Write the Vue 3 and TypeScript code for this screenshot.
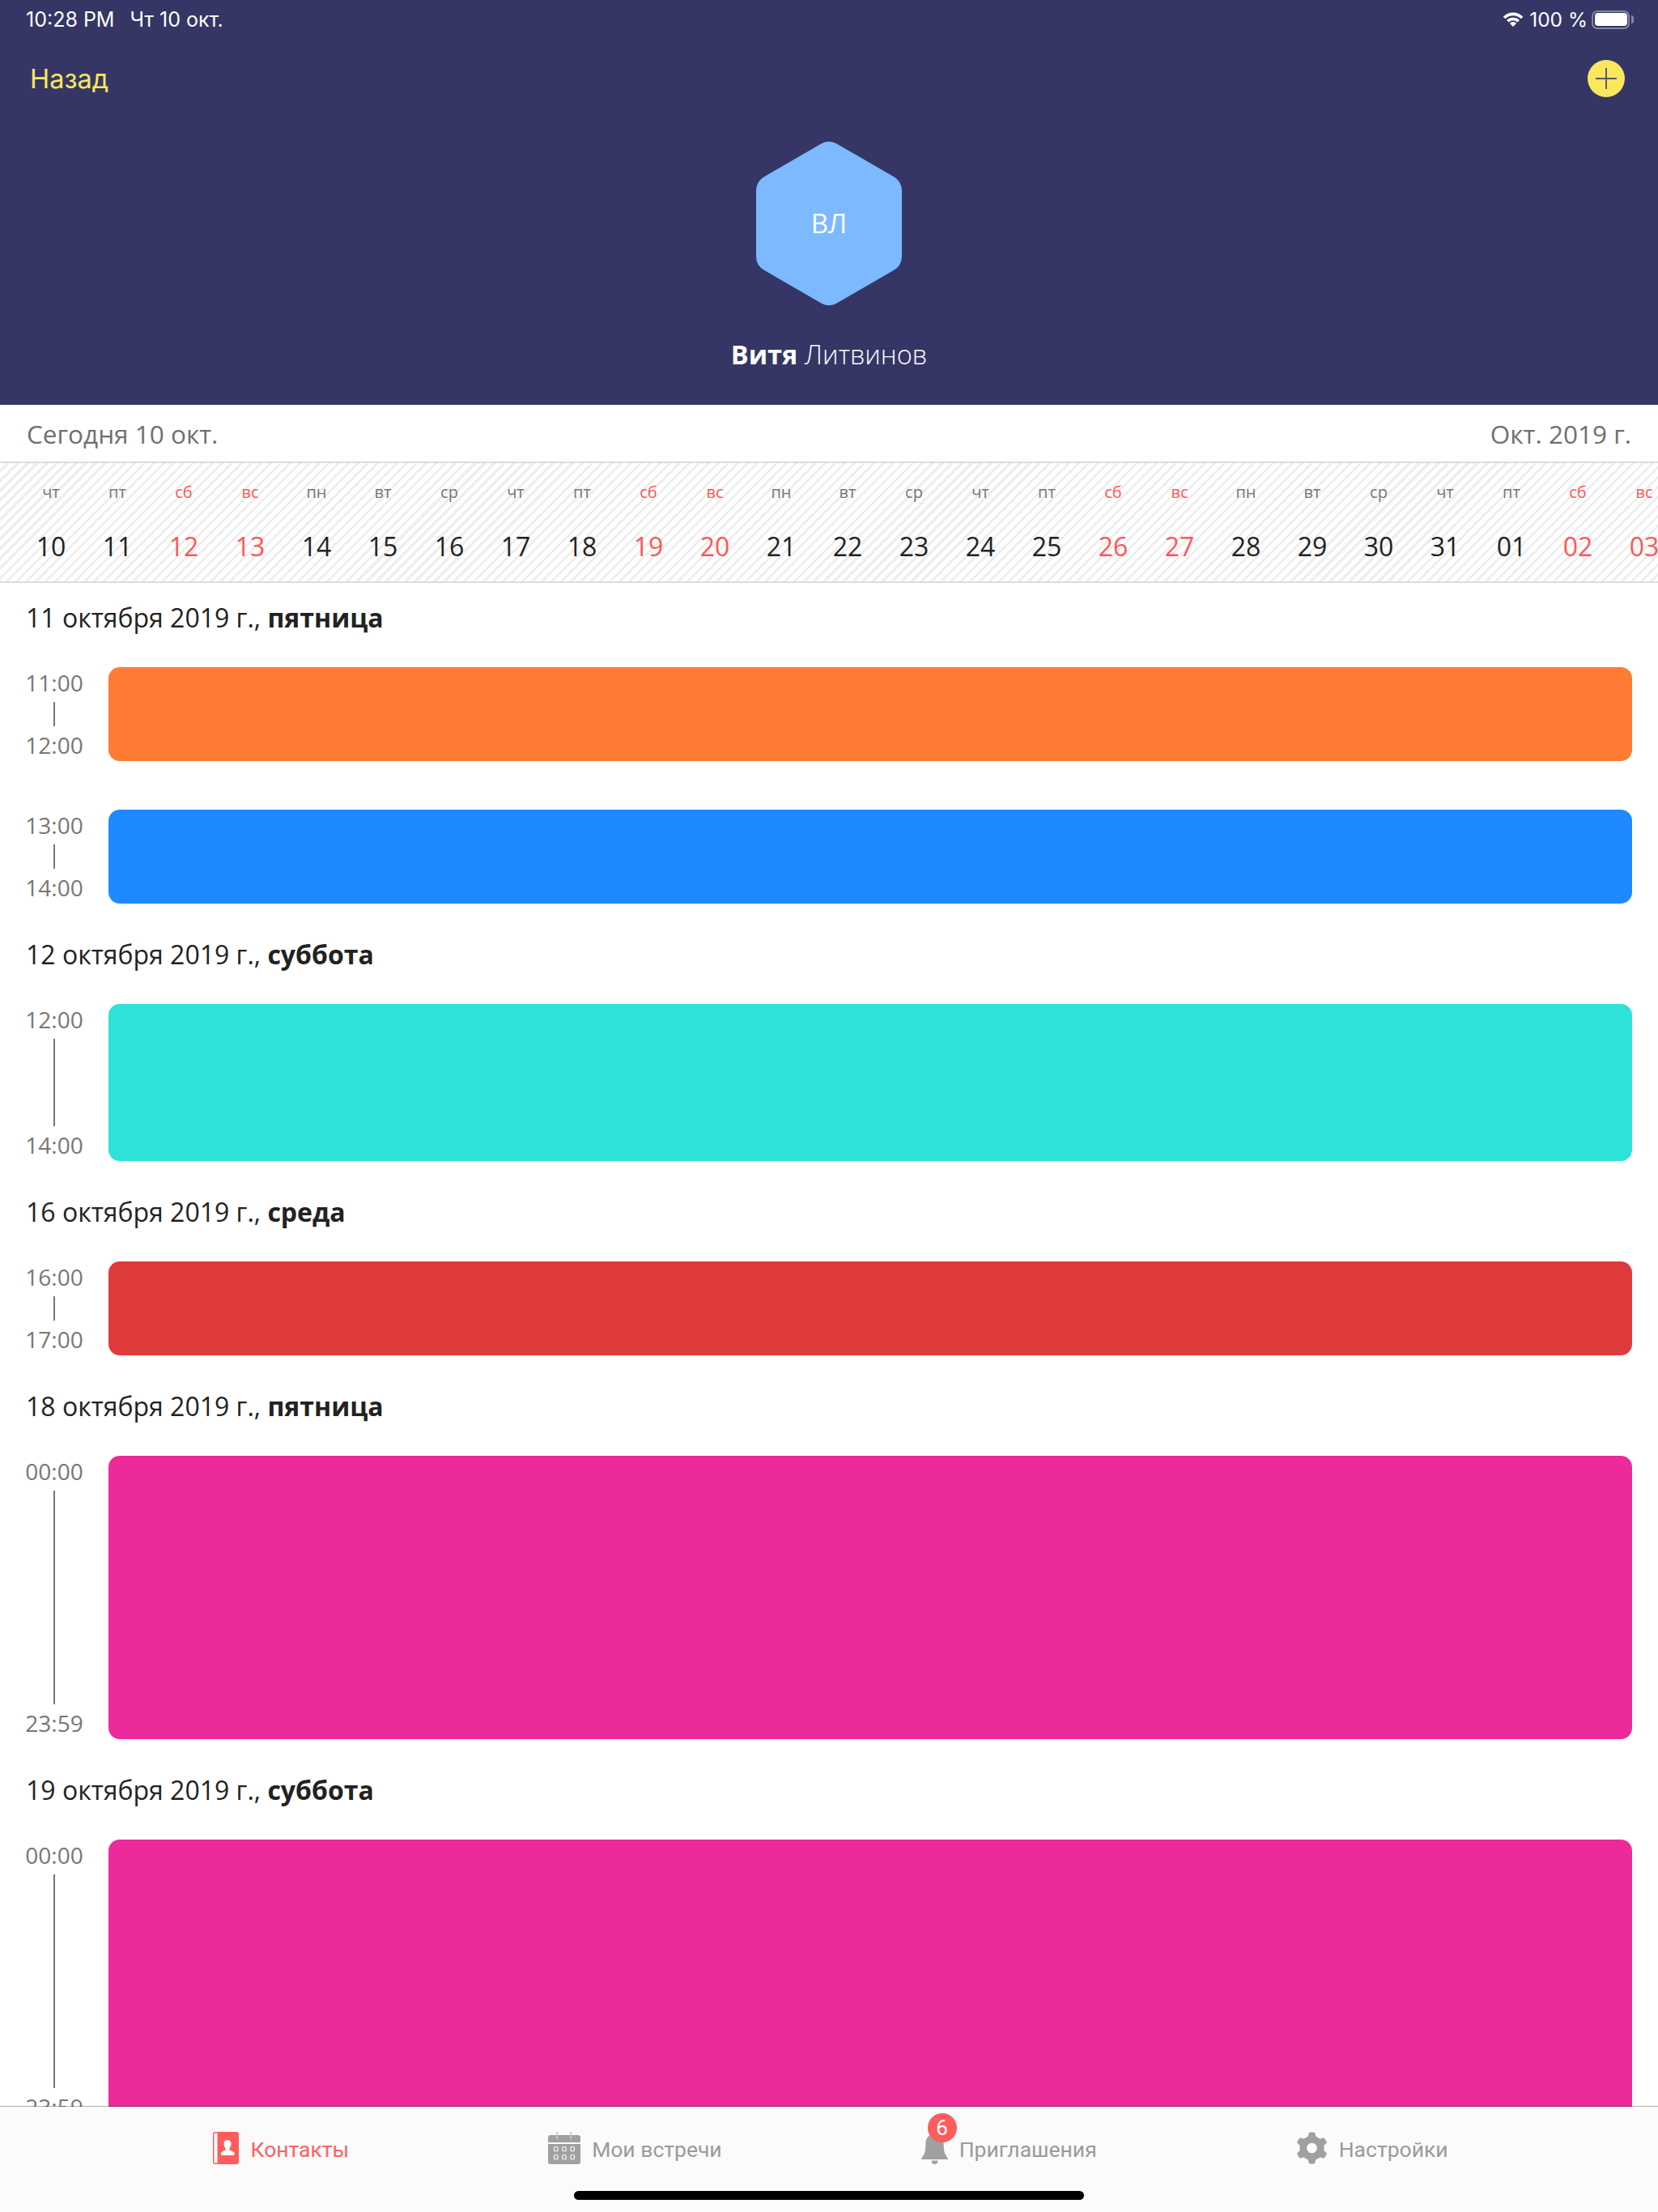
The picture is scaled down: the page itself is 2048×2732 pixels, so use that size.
<script setup lang="ts">
interface DayCell { wd: string; d: string; off: boolean }
interface Ev { from: string; to: string; color: string; h: number; lineH: number }
interface Group { title: string; bold: string; events: Ev[] }

const wds = ['чт', 'пт', 'сб', 'вс', 'пн', 'вт', 'ср']
const nums = ['10','11','12','13','14','15','16','17','18','19','20','21','22','23','24','25','26','27','28','29','30','31','01','02','03']
const days: DayCell[] = nums.map((d, i) => ({ wd: wds[i % 7], d, off: i % 7 === 2 || i % 7 === 3 }))
const gearTeeth = [0, 60, 120, 180, 240, 300]

const groups: Group[] = [
  { title: '11 октября 2019 г., ', bold: 'пятница', events: [
    { from: '11:00', to: '12:00', color: '#ff7b33', h: 116, lineH: 30 },
    { from: '13:00', to: '14:00', color: '#1f8aff', h: 116, lineH: 30 },
  ] },
  { title: '12 октября 2019 г., ', bold: 'суббота', events: [
    { from: '12:00', to: '14:00', color: '#2fe2d7', h: 194, lineH: 108 },
  ] },
  { title: '16 октября 2019 г., ', bold: 'среда', events: [
    { from: '16:00', to: '17:00', color: '#df3a3c', h: 116, lineH: 30 },
  ] },
  { title: '18 октября 2019 г., ', bold: 'пятница', events: [
    { from: '00:00', to: '23:59', color: '#ec2a9a', h: 350, lineH: 264 },
  ] },
  { title: '19 октября 2019 г., ', bold: 'суббота', events: [
    { from: '00:00', to: '23:59', color: '#ec2a9a', h: 350, lineH: 264 },
  ] },
]
</script>

<template>
  <div class="page">
    <header class="hero">
      <div class="status">
        <div class="status-l"><span>10:28 PM</span><span>Чт 10 окт.</span></div>
        <div class="status-r">
          <svg class="wifi" width="28" height="18" viewBox="0 0 28 18">
            <path fill="none" stroke="#fff" stroke-width="3.6" d="M3 7A15.500 15.500 0 0 1 25 7"/>
            <path fill="none" stroke="#fff" stroke-width="3.6" d="M7.300 11.300A9.500 9.500 0 0 1 20.700 11.300"/>
            <path fill="#fff" d="M14 18L9.800 13.800A6 6 0 0 1 18.200 13.800Z"/>
          </svg>
          <span class="pct">100 %</span>
          <div class="battery"><div class="battery-fill"></div></div>
          <div class="battery-cap"></div>
        </div>
      </div>
      <div class="nav">
        <span class="back">Назад</span>
        <button class="add" type="button" aria-label="Добавить">
          <svg width="26" height="26" viewBox="0 0 26 26"><path d="M13 0v26M0 13h26" stroke="#5a5a60" stroke-width="2" fill="none"/></svg>
        </button>
      </div>
      <div class="avatar">
        <svg class="hex" width="180" height="202" viewBox="0 0 180 202">
          <path fill="#7db9ff" d="M80 2.770A20 20 0 0 1 100 2.770L170 43.200A20 20 0 0 1 180 60.500V141.500A20 20 0 0 1 170 158.800L100 199.200A20 20 0 0 1 80 199.200L10 158.800A20 20 0 0 1 0 141.500V60.500A20 20 0 0 1 10 43.200Z"/>
        </svg>
        <span class="initials">ВЛ</span>
      </div>
      <div class="name"><b>Витя</b> Литвинов</div>
    </header>

    <div class="today">
      <span>Сегодня 10 окт.</span>
      <span>Окт. 2019 г.</span>
    </div>

    <div class="strip">
      <div v-for="c in days" :key="c.d" class="day" :class="{ off: c.off }">
        <span class="wd">{{ c.wd }}</span>
        <span class="num">{{ c.d }}</span>
      </div>
    </div>

    <main class="list">
      <section v-for="g in groups" :key="g.title + g.bold" class="group">
        <h2 class="title">{{ g.title }}<b>{{ g.bold }}</b></h2>
        <div class="events">
          <div v-for="e in g.events" :key="e.from" class="event">
            <div class="times">
              <span>{{ e.from }}</span>
              <i class="line" :style="{ height: e.lineH + 'px' }"></i>
              <span>{{ e.to }}</span>
            </div>
            <div class="card" :style="{ background: e.color, height: e.h + 'px' }"></div>
          </div>
        </div>
      </section>
    </main>

    <nav class="tabs">
      <div class="tab active">
        <svg width="32" height="40" viewBox="0 0 32 40">
          <path fill="#ff5c5c" d="M3 0h26a3 3 0 0 1 3 3v34a3 3 0 0 1-3 3H3a3 3 0 0 1-3-3V3a3 3 0 0 1 3-3z"/>
          <path fill="#fff" d="M1.500 3a1.500 1.500 0 0 1 1.500-1.500h2.500v37H3a1.500 1.500 0 0 1-1.500-1.500z"/>
          <path fill="#fff" d="M18 10c3 0 4.500 2.200 4.500 5 0 2-.8 4-2 5v2c0 1 4.500 2 6 3.500V29H10v-3.500c1.500-1.500 5.500-2.500 5.500-3.500v-2c-1.200-1-2-3-2-5 0-2.800 1.500-5 4.500-5z"/>
        </svg>
        <span>Контакты</span>
      </div>
      <div class="tab">
        <svg width="40" height="40" viewBox="0 0 40 40">
          <path fill="#a0a0a0" d="M3 4h34a3 3 0 0 1 3 3v6H0V7a3 3 0 0 1 3-3zM0 15h40v22a3 3 0 0 1-3 3H3a3 3 0 0 1-3-3z"/>
          <path stroke="#a0a0a0" stroke-width="1" d="M11 0v4M28 0v4"/>
          <path stroke="#e8e8e8" stroke-width="1" fill="none" d="M11 4v5M28 4v5"/>
          <g fill="none" stroke="#fff" stroke-width="1.200">
            <rect x="7.500" y="18.500" width="4.500" height="5.500" rx="1.800"/><rect x="17.750" y="18.500" width="4.500" height="5.500" rx="1.800"/><rect x="28" y="18.500" width="4.500" height="5.500" rx="1.800"/>
            <rect x="7.500" y="28.500" width="4.500" height="5.500" rx="1.800"/><rect x="17.750" y="28.500" width="4.500" height="5.500" rx="1.800"/><rect x="28" y="28.500" width="4.500" height="5.500" rx="1.800"/>
          </g>
        </svg>
        <span>Мои встречи</span>
      </div>
      <div class="tab">
        <div class="bell">
          <svg width="33" height="40" viewBox="0 0 33 40">
            <path fill="#a0a0a0" d="M16.500 3C23 3 27 7 27.500 13L28 22C28.500 27 31 30 33 33V34H0V33C2 30 4.500 27 5 22L5.500 13C6 7 10 3 16.500 3Z"/>
            <path fill="#a0a0a0" d="M12.500 35.500H20.500C20.500 38.500 18.500 40 16.500 40S12.500 38.500 12.500 35.500Z"/>
          </svg>
          <em class="badge">6</em>
        </div>
        <span>Приглашения</span>
      </div>
      <div class="tab">
        <svg width="39" height="40" viewBox="0 0 40 40">
          <circle cx="20" cy="20" r="11" fill="none" stroke="#a0a0a0" stroke-width="9"/>
          <path v-for="a in gearTeeth" :key="a" fill="#a0a0a0" :transform="`rotate(${a} 20 20)`" d="M14.500 8L16 1.500Q16.200 0 17.500 0H22.500Q23.800 0 24 1.500L25.500 8Z"/>
        </svg>
        <span>Настройки</span>
      </div>
      <div class="home"></div>
    </nav>
  </div>
</template>

<style>
html, body { margin: 0; background: #fff; }
</style>

<style scoped>
.page {
  width: 2048px; height: 2732px; overflow: hidden; position: relative;
  display: flex; flex-direction: column;
  font-family: "Open Sans", "Noto Sans", sans-serif; background: #fff; color: #222;
}
.hero {
  height: 500px; flex: none; background: #353665; color: #fff;
  display: flex; flex-direction: column; align-items: stretch; box-sizing: border-box;
}
.status {
  height: 48px; display: flex; justify-content: space-between; align-items: center;
  padding: 0 30px 0 32px; font-family: Inter, "Liberation Sans", sans-serif; font-size: 25px;
}
.status-l { display: flex; gap: 19px; }
.status-r { display: flex; align-items: center; gap: 5px; }
.pct { font-size: 24.500px; }
.wifi { margin-right: 1px; }
.battery { width: 47px; height: 23px; border: 2px solid #8486a6; border-radius: 7px; padding: 1.500px; box-sizing: border-box; }
.battery-fill { width: 100%; height: 100%; background: #fff; border-radius: 4px; }
.battery-cap { width: 3px; height: 10px; background: #8486a6; margin-left: -3px; border-radius: 0 3px 3px 0; }
.nav {
  height: 50px; margin-top: 24px; display: flex; justify-content: space-between; align-items: center;
  padding: 0 41px 0 37px; font-family: Inter, "Liberation Sans", sans-serif;
}
.back { color: #fae75e; font-size: 32.500px; padding-top: 1px; }
.add { width: 46px; height: 46px; padding: 0; border: 0; border-radius: 50%; background: #fae75e; display: flex; align-items: center; justify-content: center; }
.avatar { position: relative; align-self: center; width: 180px; height: 202px; margin-top: 53px; display: flex; align-items: center; justify-content: center; }
.hex { position: absolute; inset: 0; }
.initials { position: relative; font-size: 33px; padding-bottom: 2px; }
.name { text-align: center; margin-top: 39px; font-size: 32.500px; line-height: 44px; font-weight: 300; }
.name b { font-weight: 700; }
.today {
  height: 70px; flex: none; display: flex; justify-content: space-between; align-items: center;
  padding: 0 33px; font-size: 31.500px; color: #707070; box-sizing: border-box;
}
.strip {
  height: 150px; flex: none; display: flex; box-sizing: border-box; padding-left: 22px;
  border-top: 2px solid #ddd; border-bottom: 2px solid #ddd;
  background: repeating-linear-gradient(135deg, #fff 0 5.500px, #eee 5.500px 8.500px);
}
.day { flex: 0 0 82px; display: flex; flex-direction: column; align-items: center; }
.wd { font-size: 20px; line-height: 28px; margin-top: 22px; color: #777; }
.num { font-size: 32px; line-height: 44px; margin-top: 31px; color: #222; }
.day.off .wd, .day.off .num { color: #ff5757; }
.list { flex: 1; min-height: 0; overflow: hidden; padding: 0 32px; }
.title { margin: 0; height: 104px; font-size: 32px; font-weight: 400; line-height: 44px; padding-top: 21px; box-sizing: border-box; color: #222; }
.title b { font-weight: 700; }
.events { display: flex; flex-direction: column; gap: 60px; margin-bottom: 20px; }
.event { display: flex; align-items: stretch; }
.times { width: 70px; margin-right: 32px; flex: none; display: flex; flex-direction: column; align-items: center; justify-content: space-between; color: #777; font-size: 28px; line-height: 40px; }
.times span:first-child { margin: -1px 0 1px; }
.line { display: block; width: 2px; background: #777; }
.card { flex: 1; border-radius: 14px; }
.tabs {
  height: 131px; margin-top: -1px; flex: none; background: #fbfbfb; background-clip: padding-box; border-top: 1px solid rgba(0, 0, 0, 0.3); box-sizing: border-box; position: relative;
  display: flex; justify-content: center; gap: 246px; padding-left: 4px; font-family: Roboto, sans-serif; font-size: 26.500px; color: #9a9a9a;
}
.tab { display: flex; align-items: center; gap: 14px; height: 102px; }
.tab span { margin-top: 2px; }
.tab.active { color: #ff5f5f; }
.bell { position: relative; width: 33px; height: 40px; }
.badge { position: absolute; left: 8px; top: -23px; width: 36px; height: 36px; border-radius: 50%; background: #ff5c5c; color: #fff; font-style: normal; font-size: 26px; line-height: 36px; text-align: center; }
.home { position: absolute; left: 709px; bottom: 15px; width: 630px; height: 11px; border-radius: 6px; background: #000; }
</style>
